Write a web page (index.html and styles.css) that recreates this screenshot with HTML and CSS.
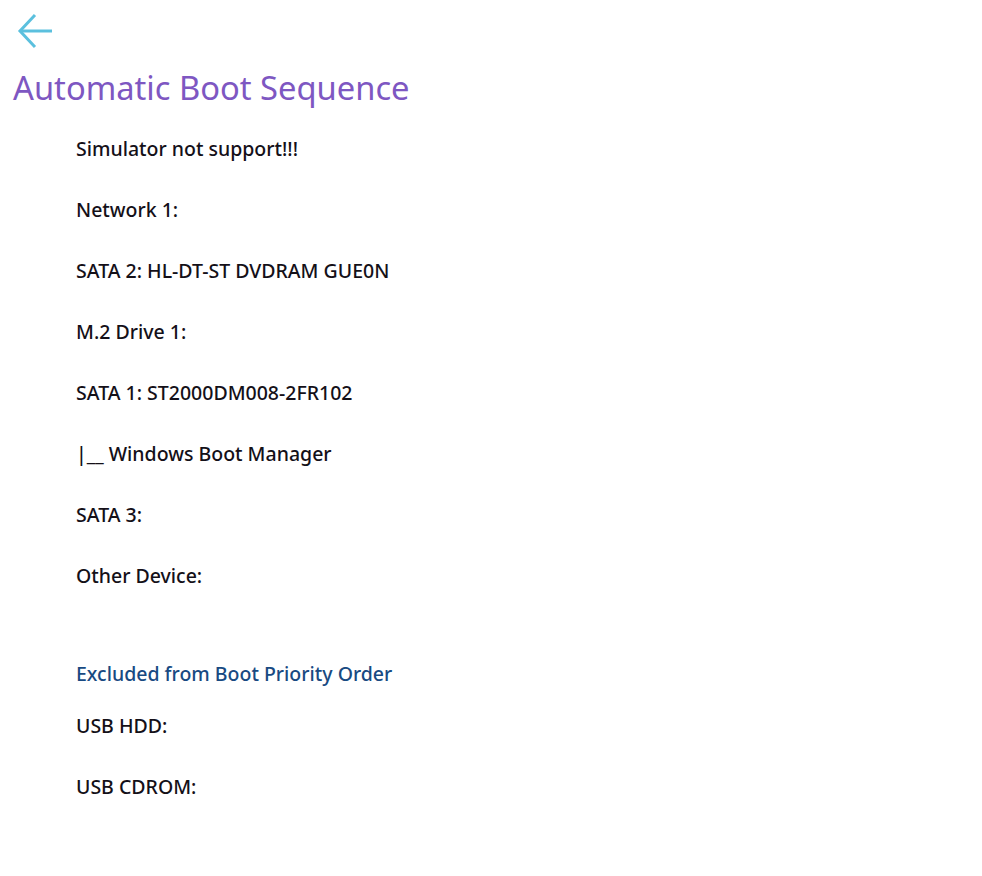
FILE: index.html
```html
<!DOCTYPE html>
<html>
<head>
<meta charset="utf-8">
<link rel="stylesheet" href="styles.css">
</head>
<body>
<div class="page">
  <div class="back">
    <svg width="36" height="36" viewBox="0 0 36 36" fill="none" stroke="#5bc0de" stroke-width="3">
      <path d="M35 18 H3"/>
      <path d="M18 2 L3 18 L18 34"/>
    </svg>
  </div>
  <h1 class="title">Automatic Boot Sequence</h1>
  <div class="list">
    <div class="item">Simulator not support!!!</div>
    <div class="item">Network 1:</div>
    <div class="item">SATA 2: HL-DT-ST DVDRAM GUE0N</div>
    <div class="item">M.2 Drive 1:</div>
    <div class="item">SATA 1: ST2000DM008-2FR102</div>
    <div class="item">|__ Windows Boot Manager</div>
    <div class="item">SATA 3:</div>
    <div class="item">Other Device:</div>
    <div class="section">Excluded from Boot Priority Order</div>
    <div class="item">USB HDD:</div>
    <div class="item">USB CDROM:</div>
  </div>
</div>
</body>
</html>
```
FILE: styles.css
```css
html, body { margin: 0; padding: 0; background: #fff; }
body { font-family: "Noto Sans", "Open Sans", sans-serif; }
.page { padding: 13px 0 0 13px; }
.back { height: 36px; padding-left: 4px; }
.back svg { display: block; }
.title {
  margin: 19px 0 0 0;
  font-weight: 400;
  font-size: 32.7px;
  line-height: 40px;
  color: #7e57c2;
}
.list { padding-left: 63px; padding-top: 29px; }
.item {
  font-size: 19.5px;
  font-weight: 500;
  color: #141018;
  height: 61px;
  line-height: 24px;
}
.section {
  font-size: 19.5px;
  font-weight: 500;
  color: #184a82;
  margin-top: 37px;
  height: 52px;
  line-height: 24px;
}
```
